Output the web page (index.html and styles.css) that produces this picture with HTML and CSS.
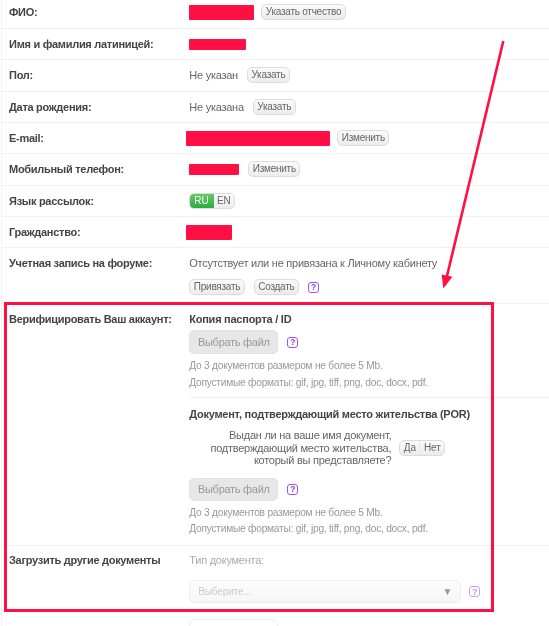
FILE: index.html
```html
<!DOCTYPE html>
<html lang="ru">
<head>
<meta charset="utf-8">
<title>Профиль</title>
<link rel="stylesheet" href="styles.css">
</head>
<body>
<main class="page">
  <div class="row row-first">
    <div class="label">ФИО:</div>
    <div class="value"><span class="mask mask-name"></span><button class="btn btn-after-name">Указать отчество</button></div>
  </div>
  <div class="row">
    <div class="label">Имя и фамилия латиницей:</div>
    <div class="value"><span class="mask mask-latin"></span></div>
  </div>
  <div class="row">
    <div class="label">Пол:</div>
    <div class="value"><span>Не указан</span><button class="btn btn-gap9">Указать</button></div>
  </div>
  <div class="row">
    <div class="label">Дата рождения:</div>
    <div class="value"><span>Не указана</span><button class="btn btn-gap9">Указать</button></div>
  </div>
  <div class="row">
    <div class="label">E-mail:</div>
    <div class="value"><span class="mask mask-email"></span><button class="btn btn-gap6">Изменить</button></div>
  </div>
  <div class="row">
    <div class="label">Мобильный телефон:</div>
    <div class="value"><span class="mask mask-phone"></span><button class="btn btn-gap9">Изменить</button></div>
  </div>
  <div class="row">
    <div class="label">Язык рассылок:</div>
    <div class="value">
      <div class="toggle"><span class="toggle-item toggle-on">RU</span><span class="toggle-item">EN</span></div>
    </div>
  </div>
  <div class="row">
    <div class="label">Гражданство:</div>
    <div class="value"><span class="mask mask-country"></span></div>
  </div>
  <div class="row row-forum">
    <div class="label">Учетная запись на форуме:</div>
    <div class="col">
      <div class="forum-text">Отсутствует или не привязана к Личному кабинету</div>
      <div class="forum-actions">
        <button class="btn">Привязать</button>
        <button class="btn">Создать</button>
        <span class="help">?</span>
      </div>
    </div>
  </div>
  <section class="row-verify">
    <div class="label">Верифицировать Ваш аккаунт:</div>
    <div class="col">
      <div class="doc doc-first">
        <h3 class="doc-title">Копия паспорта / ID</h3>
        <div class="file-line"><button class="file-btn">Выбрать файл</button><span class="help">?</span></div>
        <p class="hint hint-first">До 3 документов размером не более 5 Mb.</p>
        <p class="hint">Допустимые форматы: gif, jpg, tiff, png, doc, docx, pdf.</p>
      </div>
      <div class="doc doc-second">
        <h3 class="doc-title">Документ, подтверждающий место жительства (POR)</h3>
        <div class="question">
          <p class="question-text">Выдан ли на ваше имя документ,<br>подтверждающий место жительства,<br>который вы представляете?</p>
          <div class="toggle toggle-yn"><span class="toggle-item">Да</span><span class="toggle-item">Нет</span></div>
        </div>
        <div class="file-line"><button class="file-btn">Выбрать файл</button><span class="help">?</span></div>
        <p class="hint hint-first">До 3 документов размером не более 5 Mb.</p>
        <p class="hint">Допустимые форматы: gif, jpg, tiff, png, doc, docx, pdf.</p>
      </div>
    </div>
  </section>
  <section class="row-other">
    <div class="label">Загрузить другие документы</div>
    <div class="col">
      <div class="type-label">Тип документа:</div>
      <div class="select-line">
        <div class="select"><span>Выберите...</span><span class="select-arrow">▼</span></div>
        <span class="help help-faded">?</span>
      </div>
      <button class="next-btn"></button>
    </div>
  </section>
</main>
<div class="highlight-box"></div>
<svg class="arrow" width="549" height="626" viewBox="0 0 549 626" aria-hidden="true">
  <line x1="503.3" y1="41" x2="447" y2="276" stroke="#ff0f43" stroke-width="2.6"/>
  <polygon points="443.4,288.5 441.6,274.4 452.4,276.8" fill="#ff0f43"/>
</svg>
</body>
</html>
```
FILE: styles.css
```css
* { box-sizing: border-box; }
html, body { margin: 0; padding: 0; height: 626px; overflow: hidden; background: #fff; }
body { font-family: "Liberation Sans", Arial, sans-serif; font-size: 11px; letter-spacing: -0.25px; color: #666; position: relative; }
.page { margin-left: 1px; border-left: 1px solid #f3f3f3; height: 626px; overflow: hidden; filter: blur(0.3px); }

.row { display: flex; align-items: center; height: 31.33px; border-bottom: 1px solid #f1f1f1; padding-left: 7px; }
.row-first { height: 29px; padding-bottom: 4px; }
.label { width: 180.3px; flex: none; font-size: 11px; letter-spacing: -0.28px; font-weight: 700; color: #444; }
.value { display: flex; align-items: center; }
.col { flex: 1; min-width: 0; }

.mask { display: block; background: #ff0f43; border-radius: 1px; }
.mask-name { width: 65px; height: 15px; }
.mask-latin { width: 57px; height: 11px; }
.mask-email { width: 144px; height: 15px; margin-left: -3px; }
.mask-phone { width: 50px; height: 11px; }
.mask-country { width: 46px; height: 15px; margin-left: -3px; }

.btn { height: 16px; padding: 0 3.5px; border: 1px solid #dcdcdc; border-radius: 5px; background: linear-gradient(#fbfbfb, #ececec); font: 10px/14px "Liberation Sans", Arial, sans-serif; letter-spacing: -0.25px; color: #666; }
.btn-after-name { margin-left: 7px; }
.btn-gap9 { margin-left: 9px; }
.btn-gap6 { margin-left: 7px; }

.toggle { display: flex; height: 16px; border: 1px solid #dcdcdc; border-radius: 5px; overflow: hidden; background: linear-gradient(#fbfbfb, #ececec); font-size: 10px; letter-spacing: -0.1px; line-height: 14px; }
.toggle-item { padding: 0 3.5px; color: #666; }
.toggle-on { padding: 0 5px; margin: -1px 0 -1px -1px; line-height: 16px; color: #fff; background: linear-gradient(#66cf66, #2aa83f); }
.toggle-yn .toggle-item:first-child { border-right: 1px solid #e4e4e4; }

.row-forum { height: 56px; align-items: flex-start; padding-top: 9px; }
.forum-text { line-height: 13px; }
.forum-actions { display: flex; align-items: center; margin-top: 9px; }
.forum-actions .btn { margin-right: 9px; }

.help { display: flex; align-items: center; justify-content: center; flex: none; width: 11px; height: 11px; border: 1.5px solid #a052f5; border-radius: 3px; font-size: 8.5px; letter-spacing: 0; font-weight: 700; line-height: 1; color: #8b3ff0; }
.help-faded { opacity: .55; }

.row-verify, .row-other { display: flex; align-items: flex-start; padding-left: 7px; }
.row-verify { padding-top: 9px; border-bottom: 1px solid #f1f1f1; height: 242px; }
.row-verify > .label { line-height: 13px; }
.doc-title { margin: 0; font-size: 11px; letter-spacing: -0.25px; line-height: 13px; font-weight: 700; color: #444; }
.doc-first { height: 84px; border-bottom: 1px solid #f1f1f1; box-sizing: content-box; }
.doc-second { padding-top: 10px; }
.file-line { display: flex; align-items: center; margin-top: 4px; }
.file-btn { width: 89px; height: 24px; padding: 0; border: 1px solid #e2e2e2; border-radius: 5px; background: #e7e7e7; font: 11px "Liberation Sans", Arial, sans-serif; letter-spacing: -0.28px; color: #999; }
.file-line .help { margin-left: 9px; }
.hint { margin: 0; font-size: 10.2px; letter-spacing: -0.24px; line-height: 16.4px; color: #999; }
.hint-first { margin-top: 4px; }

.question { display: flex; align-items: center; margin-top: 8px; margin-bottom: 11px; }
.question-text { width: 202px; margin: 0; font-size: 11px; line-height: 12.5px; text-align: right; }
.toggle-yn { margin-left: 8px; }
.doc-second .file-btn { height: 23px; }

.row-other { padding-top: 8px; }
.row-other > .label { line-height: 13px; }
.type-label { line-height: 13px; color: #aaa; }
.select-line { display: flex; align-items: center; margin-top: 13px; }
.select { display: flex; justify-content: space-between; align-items: center; width: 272px; height: 23px; padding: 0 8px; border: 1px solid #eee; border-radius: 5px; background: linear-gradient(#fdfdfd, #f6f6f6); font-size: 10px; letter-spacing: -0.15px; color: #ccc; }
.select-arrow { font-size: 10px; color: #999; }
.select-line .help { margin-left: 8px; }
.next-btn { display: block; width: 89px; height: 24px; margin-top: 16px; border: 1px solid #eee; border-radius: 5px; background: #fff; }

.highlight-box { position: absolute; left: 4px; top: 302px; width: 490px; height: 310px; border: 3px solid #ff0f43; pointer-events: none; }
.arrow { position: absolute; left: 0; top: 0; pointer-events: none; }
```
